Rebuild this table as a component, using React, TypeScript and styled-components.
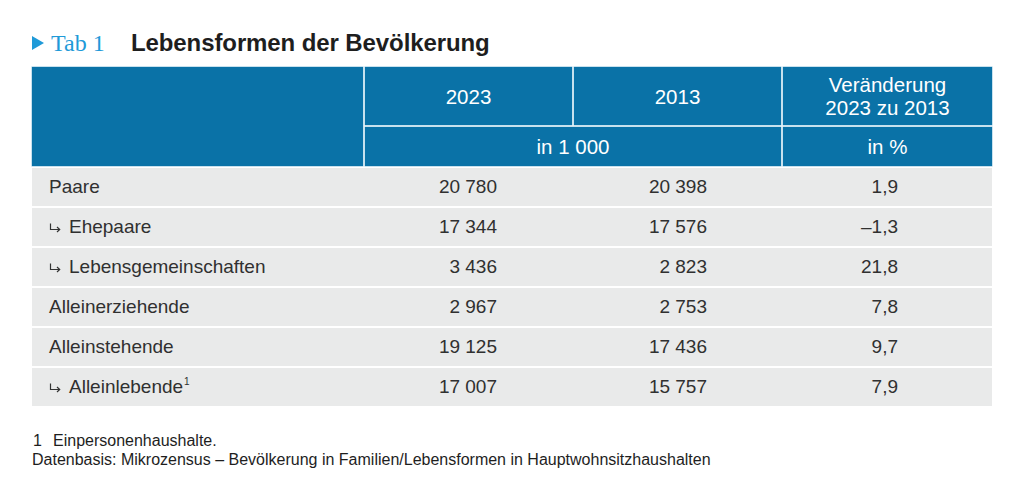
import styled, { createGlobalStyle } from "styled-components";

const GlobalStyle = createGlobalStyle`
  html, body {
    margin: 0;
    padding: 0;
    background: #ffffff;
  }
  body {
    font-family: "Liberation Sans", Arial, sans-serif;
    color: #2b2b2b;
  }
`;

const Page = styled.div`
  width: 1024px;
  height: 500px;
  box-sizing: border-box;
  padding: 29px 32px 0 32px;
  display: flex;
  flex-direction: column;
`;

const TitleRow = styled.div`
  display: flex;
  align-items: center;
  height: 28px;
  margin-bottom: 10px;
`;

const TabLabel = styled.div`
  display: flex;
  align-items: center;
  gap: 7px;
  width: 99px;
  color: #1f9ad8;
  font-family: "Liberation Serif", "Times New Roman", serif;
  font-size: 24px;
`;

const Title = styled.h1`
  margin: 0;
  font-size: 24px;
  font-weight: 700;
  color: #1e1e1e;
  letter-spacing: -0.1px;
`;

const Head = styled.div`
  display: grid;
  grid-template-columns: 331px 207px 207px 209px;
  grid-template-rows: 58px 39px;
  gap: 2px;
  margin-bottom: 2px;
`;

const HeadCell = styled.div<{ $col: string; $row: string }>`
  grid-column: ${(p) => p.$col};
  grid-row: ${(p) => p.$row};
  background: #0a72a7;
  box-shadow: 0 0 0 0.5px #8fc3de;
  color: #ffffff;
  font-size: 20.5px;
  line-height: 23px;
  display: flex;
  align-items: center;
  justify-content: center;
  text-align: center;
`;

const Body = styled.div`
  display: flex;
  flex-direction: column;
  gap: 2px;
`;

const Row = styled.div`
  display: grid;
  grid-template-columns: 333px 209px 209px 209px;
  height: 38px;
  background: #e9eaea;
  font-size: 19px;
  color: #303030;
`;

const Label = styled.div`
  display: flex;
  align-items: center;
  padding-left: 17px;
`;

const Arrow = styled.svg`
  width: 12px;
  height: 10px;
  margin-right: 8px;
  margin-top: 1px;
  flex: none;
`;

const Value = styled.div<{ $pad: number }>`
  display: flex;
  align-items: center;
  justify-content: flex-end;
  padding-right: ${(p) => p.$pad}px;
`;

const Sup = styled.span`
  font-size: 10px;
  position: relative;
  top: -6px;
  margin-left: 1px;
`;

const Notes = styled.div`
  margin-top: 25px;
  font-size: 16px;
  line-height: 19px;
  color: #1e1e1e;
`;

const NoteNum = styled.span`
  display: inline-block;
  width: 20px;
  padding-left: 1px;
`;

type Item = {
  label: string;
  sub?: boolean;
  sup?: string;
  a: string;
  b: string;
  c: string;
};

const rows: Item[] = [
  { label: "Paare", a: "20\u00a0780", b: "20\u00a0398", c: "1,9" },
  { label: "Ehepaare", sub: true, a: "17\u00a0344", b: "17\u00a0576", c: "\u20131,3" },
  { label: "Lebensgemeinschaften", sub: true, a: "3\u00a0436", b: "2\u00a0823", c: "21,8" },
  { label: "Alleinerziehende", a: "2\u00a0967", b: "2\u00a0753", c: "7,8" },
  { label: "Alleinstehende", a: "19\u00a0125", b: "17\u00a0436", c: "9,7" },
  { label: "Alleinlebende", sub: true, sup: "1", a: "17\u00a0007", b: "15\u00a0757", c: "7,9" },
];

function SubArrow() {
  return (
    <Arrow viewBox="0 0 12 10" fill="none" stroke="#333" strokeWidth="1.2">
      <path d="M1.5 0.5 V6.5 H10.5" />
      <path d="M8 4 L10.7 6.5 L8 9" />
    </Arrow>
  );
}

export default function App() {
  return (
    <Page>
      <GlobalStyle />
      <TitleRow>
        <TabLabel>
          <svg width="12" height="14" viewBox="0 0 12 14">
            <polygon points="0,0 12,7 0,14" fill="#1f9ad8" />
          </svg>
          Tab 1
        </TabLabel>
        <Title>Lebensformen der Bevölkerung</Title>
      </TitleRow>

      <Head>
        <HeadCell $col="1" $row="1 / span 2" />
        <HeadCell $col="2" $row="1">2023</HeadCell>
        <HeadCell $col="3" $row="1">2013</HeadCell>
        <HeadCell $col="4" $row="1">
          Veränderung
          <br />
          2023 zu 2013
        </HeadCell>
        <HeadCell $col="2 / span 2" $row="2">in 1 000</HeadCell>
        <HeadCell $col="4" $row="2">in %</HeadCell>
      </Head>

      <Body>
        {rows.map((r) => (
          <Row key={r.label}>
            <Label>
              {r.sub && <SubArrow />}
              {r.label}
              {r.sup && <Sup>{r.sup}</Sup>}
            </Label>
            <Value $pad={77}>{r.a}</Value>
            <Value $pad={76}>{r.b}</Value>
            <Value $pad={94}>{r.c}</Value>
          </Row>
        ))}
      </Body>

      <Notes>
        <div>
          <NoteNum>1</NoteNum>Einpersonenhaushalte.
        </div>
        <div>
          Datenbasis: Mikrozensus – Bevölkerung in Familien/Lebensformen in
          Hauptwohnsitzhaushalten
        </div>
      </Notes>
    </Page>
  );
}
